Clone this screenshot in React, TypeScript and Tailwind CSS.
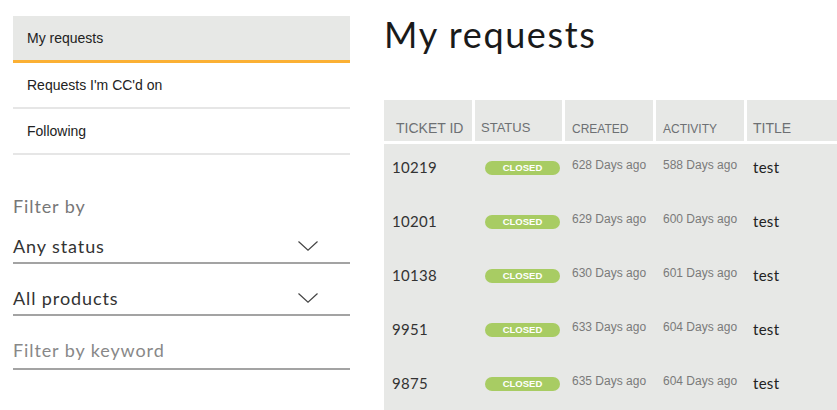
const tabs = [
  { label: "My requests", active: true },
  { label: "Requests I'm CC'd on", active: false },
  { label: "Following", active: false },
];

const tickets = [
  { id: "10219", created: "628 Days ago", activity: "588 Days ago", title: "test" },
  { id: "10201", created: "629 Days ago", activity: "600 Days ago", title: "test" },
  { id: "10138", created: "630 Days ago", activity: "601 Days ago", title: "test" },
  { id: "9951", created: "633 Days ago", activity: "604 Days ago", title: "test" },
  { id: "9875", created: "635 Days ago", activity: "604 Days ago", title: "test" },
];

const cols = "grid grid-cols-[88px_87px_88px_88px_1fr] gap-x-[3px]";

function Chevron() {
  return (
    <svg width="20" height="10" viewBox="0 0 20 10" className="shrink-0">
      <path d="M0.5 0.5 L10 9.2 L19.5 0.5" fill="none" stroke="#444" strokeWidth="1.2" />
    </svg>
  );
}

function SelectField({ label }: { label: string }) {
  return (
    <div className="flex items-center justify-between pb-[4px] pr-[32px] border-b-2 border-[#a3a3a3]">
      <span className="text-[18px] leading-[24px] tracking-[0.05em] text-[#333]">{label}</span>
      <Chevron />
    </div>
  );
}

export default function App() {
  return (
    <div className="flex w-[837px] h-[410px] overflow-hidden bg-white pl-[13px] font-['Lato',sans-serif]">
      <aside className="w-[337px] shrink-0 pt-[16px]">
        <nav className="font-['Liberation_Sans',Arial,sans-serif] text-[14px] text-[#222]">
          {tabs.map((t) => (
            <div
              key={t.label}
              className={
                t.active
                  ? "h-[47px] flex items-center px-[14px] bg-[#e7e8e6] border-b-[3px] border-[#fbb034]"
                  : "h-[46px] flex items-center px-[14px] border-b-2 border-[#e6e6e6]"
              }
            >
              {t.label}
            </div>
          ))}
        </nav>

        <div className="mt-[39px] text-[18px] leading-[24px] tracking-[0.05em] text-[#777]">Filter by</div>
        <div className="mt-[16px]">
          <SelectField label="Any status" />
        </div>
        <div className="mt-[22px]">
          <SelectField label="All products" />
        </div>
        <div className="mt-[22px] pb-[6px] border-b-2 border-[#a3a3a3] text-[18px] leading-[24px] tracking-[0.05em] text-[#888]">
          Filter by keyword
        </div>
      </aside>

      <main className="flex-1 ml-[34px] pt-[12px] min-w-0">
        <h1 className="text-[36px] leading-[44px] tracking-[0.045em] text-[#1a1a1a]">My requests</h1>

        <div className="mt-[44px]">
          <div className={`${cols} h-[41px] font-['Liberation_Sans',Arial,sans-serif] text-[#6d7073] leading-[16px]`}>
            <div className="bg-[#e7e8e6] flex items-end pb-[5px] pl-[12px] text-[14px]">TICKET ID</div>
            <div className="bg-[#e7e8e6] flex items-end pb-[5px] pl-[6px] text-[13px]">STATUS</div>
            <div className="bg-[#e7e8e6] flex items-end pb-[4px] pl-[7px] text-[12px]">CREATED</div>
            <div className="bg-[#e7e8e6] flex items-end pb-[4px] pl-[7px] text-[12px]">ACTIVITY</div>
            <div className="bg-[#e7e8e6] flex items-end pb-[5px] pl-[6px] text-[14px]">TITLE</div>
          </div>

          <div className="mt-[3px] bg-[#e7e8e6]">
            {tickets.map((t) => (
              <div key={t.id} className={`${cols} h-[54px] pt-[13px] items-start`}>
                <div className="pl-[8px] text-[15px] leading-[20px] tracking-[0.02em] text-[#333]">{t.id}</div>
                <div className="pl-[10px] pt-[4px]">
                  <span className="flex items-center justify-center w-[75px] h-[14px] rounded-full bg-[#a8cc63] text-white text-[9.5px] font-bold font-['Liberation_Sans',Arial,sans-serif] leading-none">
                    CLOSED
                  </span>
                </div>
                <div className="pl-[7px] -mt-[2px] text-[12px] leading-[20px] text-[#7a7a7a] font-['Liberation_Sans',Arial,sans-serif] whitespace-nowrap">
                  {t.created}
                </div>
                <div className="pl-[7px] -mt-[2px] text-[12px] leading-[20px] text-[#7a7a7a] font-['Liberation_Sans',Arial,sans-serif] whitespace-nowrap">
                  {t.activity}
                </div>
                <div className="pl-[6px] text-[15px] leading-[20px] tracking-[0.02em] text-[#222]">{t.title}</div>
              </div>
            ))}
          </div>
        </div>
      </main>
    </div>
  );
}
